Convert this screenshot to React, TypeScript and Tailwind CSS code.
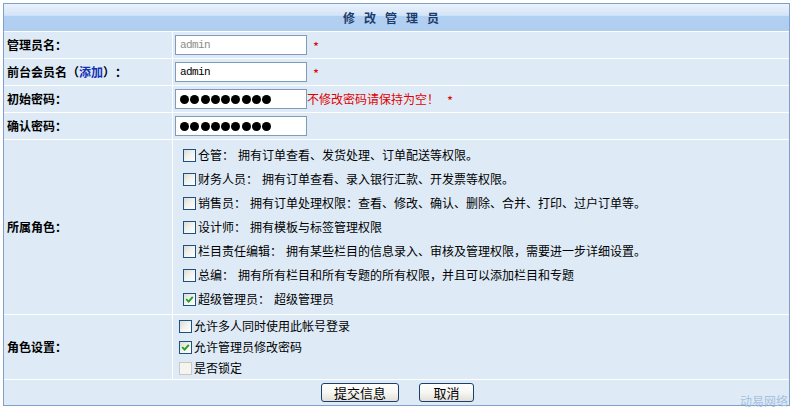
import React from "react";

const FONT = { fontFamily: '"Noto Sans CJK SC", "Noto Sans", sans-serif' };

function Box({ checked = false, disabled = false }: { checked?: boolean; disabled?: boolean }) {
  return (
    <span
      className={
        "inline-flex w-[13px] h-[13px] shrink-0 items-center justify-center border " +
        (disabled
          ? "border-[#c9c9c2] bg-[#f4f4f0]"
          : "border-[#1c5180] bg-gradient-to-br from-[#dcdcd5] via-[#f2f2ef] to-white")
      }
    >
      {checked && (
        <svg width="9" height="9" viewBox="0 0 9 9">
          <path d="M1.2 4.2 L3.6 6.6 L7.8 1.8" fill="none" stroke="#21a121" strokeWidth="1.9" />
        </svg>
      )}
    </span>
  );
}

function Dots() {
  return (
    <div className="flex items-center gap-[1.3px]">
      {Array.from({ length: 9 }).map((_, i) => (
        <span key={i} className="block w-[9px] h-[9px] rounded-full bg-black" />
      ))}
    </div>
  );
}

function Row({ label, children, h }: { label: React.ReactNode; children: React.ReactNode; h: string }) {
  return (
    <div className={"flex gap-px " + h}>
      <div className="w-[168px] shrink-0 bg-[#deebf7] flex items-center pl-[3px] text-[12px] font-bold text-black">
        {label}
      </div>
      <div className="flex-1 bg-[#deebf7] flex items-center">{children}</div>
    </div>
  );
}

const roles: [string, string, boolean][] = [
  ["仓管：", "拥有订单查看、发货处理、订单配送等权限。", false],
  ["财务人员：", "拥有订单查看、录入银行汇款、开发票等权限。", false],
  ["销售员：", "拥有订单处理权限：查看、修改、确认、删除、合并、打印、过户订单等。", false],
  ["设计师：", "拥有模板与标签管理权限", false],
  ["栏目责任编辑：", "拥有某些栏目的信息录入、审核及管理权限，需要进一步详细设置。", false],
  ["总编：", "拥有所有栏目和所有专题的所有权限，并且可以添加栏目和专题", false],
  ["超级管理员：", "超级管理员", true],
];

export default function App() {
  return (
    <div
      className="relative w-[793px] h-[408px] bg-white overflow-hidden pt-[3px] pl-[3px] [text-spacing-trim:space-all]"
      style={FONT}
    >
      <div className="w-[787px] border border-[#809fca] bg-white flex flex-col gap-px">
        {/* title bar */}
        <div className="h-[27px] flex items-center justify-center pr-[11px] bg-[linear-gradient(to_bottom,#eaf2fc_0%,#d3e4f7_42%,#b2d0f1_46%,#afcef0_100%)]">
          <div className="flex gap-[9px] text-[12px] font-bold text-[#1b3c6d]">
            <span>修</span>
            <span>改</span>
            <span>管</span>
            <span>理</span>
            <span>员</span>
          </div>
        </div>

        <Row label="管理员名：" h="h-[26px]">
          <div
            className="ml-[2px] w-[132px] h-[20px] border border-[#7f9db9] bg-white flex items-center pl-[4px] text-[11px] tracking-[-0.6px] text-[#8c8c8c]"
            style={{ fontFamily: '"Liberation Mono", monospace' }}
          >
            admin
          </div>
          <span className="ml-[6px] mt-[3px] text-[13px] text-[#e00000]">*</span>
        </Row>

        <Row
          label={
            <span>
              前台会员名（<span className="text-[#1230b0]">添加</span>）：
            </span>
          }
          h="h-[26px]"
        >
          <div
            className="ml-[2px] w-[132px] h-[20px] border border-[#7f9db9] bg-white flex items-center pl-[4px] text-[11px] tracking-[-0.6px] text-black"
            style={{ fontFamily: '"Liberation Mono", monospace' }}
          >
            admin
          </div>
          <span className="ml-[6px] mt-[3px] text-[13px] text-[#e00000]">*</span>
        </Row>

        <Row label="初始密码：" h="h-[26px]">
          <div className="ml-[2px] w-[132px] h-[20px] border border-[#7f9db9] bg-white flex items-center pl-[4px]">
            <Dots />
          </div>
          <span className="text-[12px] text-[#e00000]">不修改密码请保持为空！</span>
          <span className="ml-[8px] mt-[3px] text-[13px] text-[#e00000]">*</span>
        </Row>

        <Row label="确认密码：" h="h-[26px]">
          <div className="ml-[2px] w-[132px] h-[20px] border border-[#7f9db9] bg-white flex items-center pl-[4px]">
            <Dots />
          </div>
        </Row>

        <Row label="所属角色：" h="h-[174px]">
          <div className="flex flex-col pl-[10px]">
            {roles.map(([name, desc, on]) => (
              <div key={name} className="h-[24px] flex items-center text-[12px] text-black">
                <Box checked={on} />
                <span className="ml-[2px]">{name}</span>
                <span className="ml-[4px]">{desc}</span>
              </div>
            ))}
          </div>
        </Row>

        <Row label="角色设置：" h="h-[64px]">
          <div className="flex flex-col pl-[6px]">
            <div className="h-[21px] flex items-center text-[12px] text-black">
              <Box />
              <span className="ml-[2px]">允许多人同时使用此帐号登录</span>
            </div>
            <div className="h-[21px] flex items-center text-[12px] text-black">
              <Box checked />
              <span className="ml-[2px]">允许管理员修改密码</span>
            </div>
            <div className="h-[21px] flex items-center text-[12px] text-black">
              <Box disabled />
              <span className="ml-[2px]">是否锁定</span>
            </div>
          </div>
        </Row>

        <div className="h-[25px] bg-[#deebf7] flex items-center justify-center gap-[20px] pl-[2px]">
          <button className="w-[78px] h-[19px] rounded-[3px] border border-[#1d3f6e] bg-gradient-to-b from-white via-[#f6f6f3] to-[#e2e0d6] text-[13px] leading-none text-black">
            提交信息
          </button>
          <button className="w-[55px] h-[19px] rounded-[3px] border border-[#1d3f6e] bg-gradient-to-b from-white via-[#f6f6f3] to-[#e2e0d6] text-[13px] leading-none text-black">
            取消
          </button>
        </div>
      </div>

      <span className="absolute left-[740px] top-[392px] text-[12px] text-[#a9c1de]">动易网络</span>
    </div>
  );
}
